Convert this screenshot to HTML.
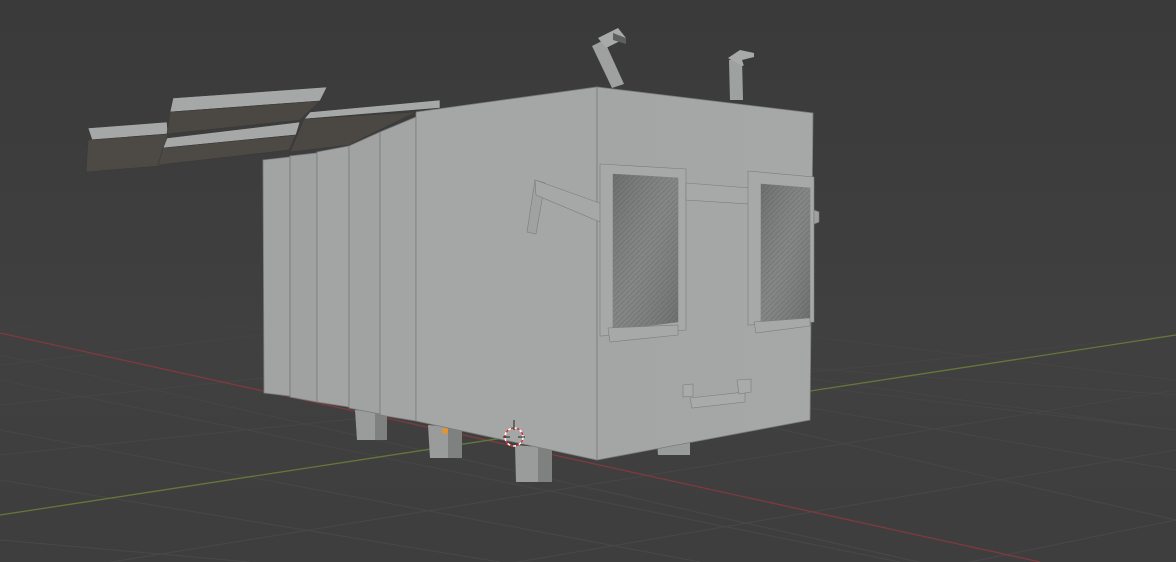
<!DOCTYPE html>
<html><head><meta charset="utf-8"><style>
html,body{margin:0;padding:0;background:#3d3d3d;width:1176px;height:562px;overflow:hidden}
svg{display:block}
</style></head><body>
<svg width="1176" height="562" viewBox="0 0 1176 562" xmlns="http://www.w3.org/2000/svg">
<defs>
<linearGradient id="bg" x1="0" y1="0" x2="0" y2="1">
<stop offset="0" stop-color="#3a3a3a"/><stop offset="0.6" stop-color="#404040"/><stop offset="1" stop-color="#3e3e3e"/>
</linearGradient>
<linearGradient id="fade" x1="0" y1="0" x2="0" y2="1">
<stop offset="0" stop-color="#fff" stop-opacity="0"/><stop offset="0.25" stop-color="#fff" stop-opacity="0.5"/><stop offset="1" stop-color="#fff" stop-opacity="0.9"/>
</linearGradient>
<mask id="gm"><rect x="0" y="290" width="1176" height="272" fill="url(#fade)"/></mask>
<pattern id="tex" width="5" height="5" patternUnits="userSpaceOnUse"><rect width="5" height="5" fill="#7c7d7d"/><path d="M0 5L5 0" stroke="#686969" stroke-width="1"/></pattern>
<linearGradient id="eyeg" x1="0" y1="0" x2="1" y2="1">
<stop offset="0" stop-color="#5f6060" stop-opacity="0.5"/><stop offset="0.5" stop-color="#9a9c9c" stop-opacity="0.3"/><stop offset="1" stop-color="#5f6060" stop-opacity="0.5"/>
</linearGradient>
<linearGradient id="front" x1="0" y1="0" x2="1" y2="0">
<stop offset="0" stop-color="#a4a6a6"/><stop offset="1" stop-color="#a6a8a8"/>
</linearGradient>
</defs>
<rect width="1176" height="562" fill="url(#bg)"/>
<g mask="url(#gm)" stroke="#4a4a4a" stroke-width="1" fill="none">
<path d="M0 300L1176 120M0 330L1176 175M0 365L1176 230M0 405L1176 285M0 455L1176 335M0 580L1176 390M0 650L1176 450M0 760L1176 520M200 700L1176 600"/>
<path d="M0 250L1176 520M0 270L1176 470M0 290L1176 430M0 310L1176 395M0 355L1176 620M0 380L900 562M0 430L700 562M0 480L500 562M0 540L250 562M250 300L1176 430M500 300L1176 380"/>
</g>
<line x1="0" y1="333" x2="1040" y2="562" stroke="#7e3a3e" stroke-width="1.3"/>
<line x1="0" y1="515" x2="1176" y2="335" stroke="#65773a" stroke-width="1.3"/>
<!-- legs -->
<polygon points="355,410 387,412 387,440 357,440" fill="#9a9c9c"/>
<polygon points="375,412 387,412 387,440 375,440" fill="#7f8181"/>
<polygon points="428,425 462,428 462,458 430,458" fill="#9a9c9c"/>
<polygon points="448,428 462,428 462,458 448,458" fill="#7f8181"/>
<polygon points="515,445 552,448 552,482 516,482" fill="#9a9c9c"/>
<polygon points="538,448 552,448 552,482 538,482" fill="#7f8181"/>
<polygon points="657,442 690,442 690,455 658,455" fill="#9a9c9c"/>
<!-- slats -->
<g stroke="#7a7c7c" stroke-width="0.8">
<polygon points="263,160 290,157 290,396 264,393" fill="#a2a4a4"/>
<polygon points="290,156 317,153 317,402 290,397" fill="#a0a2a2"/>
<polygon points="317,152 349,146 349,407 317,402" fill="#a3a5a5"/>
<polygon points="349,146 380,132 380,414 349,408" fill="#a1a3a3"/>
<polygon points="380,132 416,117 416,421 380,415" fill="#a3a5a5"/>
<polygon points="416,112 597,87 597,460 416,421" fill="#a5a7a7"/>
<polygon points="597,87 813,113 810,420 597,460" fill="url(#front)"/>
</g>
<!-- wings -->
<g stroke="#3a3a3a" stroke-width="0.6">
<polygon points="88,128 167,122 168,134 92,140" fill="#a6a8a8"/>
<polygon points="88,140 168,134 160,166 86,172" fill="#4d4945"/>
<polygon points="173,98 327,87 320,101 170,112" fill="#a6a8a8"/>
<polygon points="170,112 320,101 300,120 167,134" fill="#4b4743"/>
<polygon points="167,138 300,122 296,135 163,148" fill="#a6a8a8"/>
<polygon points="163,148 296,135 289,150 158,165" fill="#4d4945"/>
<polygon points="310,112 440,100 440,108 304,119" fill="#a6a8a8"/>
<polygon points="304,119 416,112 349,145 290,152" fill="#4b4743"/>
</g>
<!-- antennas -->
<polygon points="592,46 604,40 624,84 612,88" fill="#9fa1a1"/>
<polygon points="598,38 618,28 626,38 606,48" fill="#a8aaaa"/>
<polygon points="613,33 626,38 626,44 613,40" fill="#5e6060"/>
<polygon points="729,60 742,58 743,100 730,100" fill="#9fa1a1"/>
<polygon points="728,58 740,50 754,53 754,62 742,66" fill="#a8aaaa"/>
<polygon points="742,60 754,57 754,64 744,66" fill="#3a3a3a"/>
<!-- arm -->
<polygon points="535,180 545,183 536,234 527,232" fill="#a0a2a2" stroke="#7a7c7c" stroke-width="0.6"/>
<polygon points="535,180 605,205 600,222 536,195" fill="#a6a8a8" stroke="#7a7c7c" stroke-width="0.6"/>
<!-- eyes -->
<g stroke="#7a7c7c" stroke-width="0.6">
<polygon points="600,164 686,169 686,330 600,336" fill="#a7a9a9"/>
<polygon points="613,174 678,178 678,322 613,330" fill="url(#tex)"/>
<polygon points="613,174 678,178 678,322 613,330" fill="url(#eyeg)" stroke="none"/>
<polygon points="608,328 678,325 678,335 610,342" fill="#a7a9a9"/>
<polygon points="686,183 750,188 750,204 686,200" fill="#a7a9a9"/>
<polygon points="748,171 814,177 814,322 748,325" fill="#a7a9a9"/>
<polygon points="761,184 810,188 810,318 761,321" fill="url(#tex)"/>
<polygon points="761,184 810,188 810,318 761,321" fill="url(#eyeg)" stroke="none"/>
<polygon points="754,322 810,318 810,326 756,333" fill="#a7a9a9"/>
<polygon points="814,210 819,212 819,222 814,224" fill="#9fa1a1"/>
</g>
<!-- mouth -->
<g stroke="#7a7c7c" stroke-width="0.6" fill="#a9abab">
<polygon points="683,385 693,384 693,396 683,397"/>
<polygon points="690,398 745,392 745,402 692,408"/>
<polygon points="737,380 751,379 751,392 739,394"/>
</g>
<!-- origin/cursor -->
<circle cx="445" cy="431" r="3" fill="#e8942a"/>
<circle cx="514" cy="437" r="9" fill="none" stroke="#fff" stroke-width="1.5" stroke-dasharray="3 3"/>
<circle cx="514" cy="437" r="9" fill="none" stroke="#d33" stroke-width="1.5" stroke-dasharray="3 3" stroke-dashoffset="3"/>
<line x1="514" y1="420" x2="514" y2="430" stroke="#222"/>
<line x1="503" y1="437" x2="510" y2="437" stroke="#222"/>
<line x1="518" y1="437" x2="525" y2="437" stroke="#222"/>
</svg>
</body></html>
